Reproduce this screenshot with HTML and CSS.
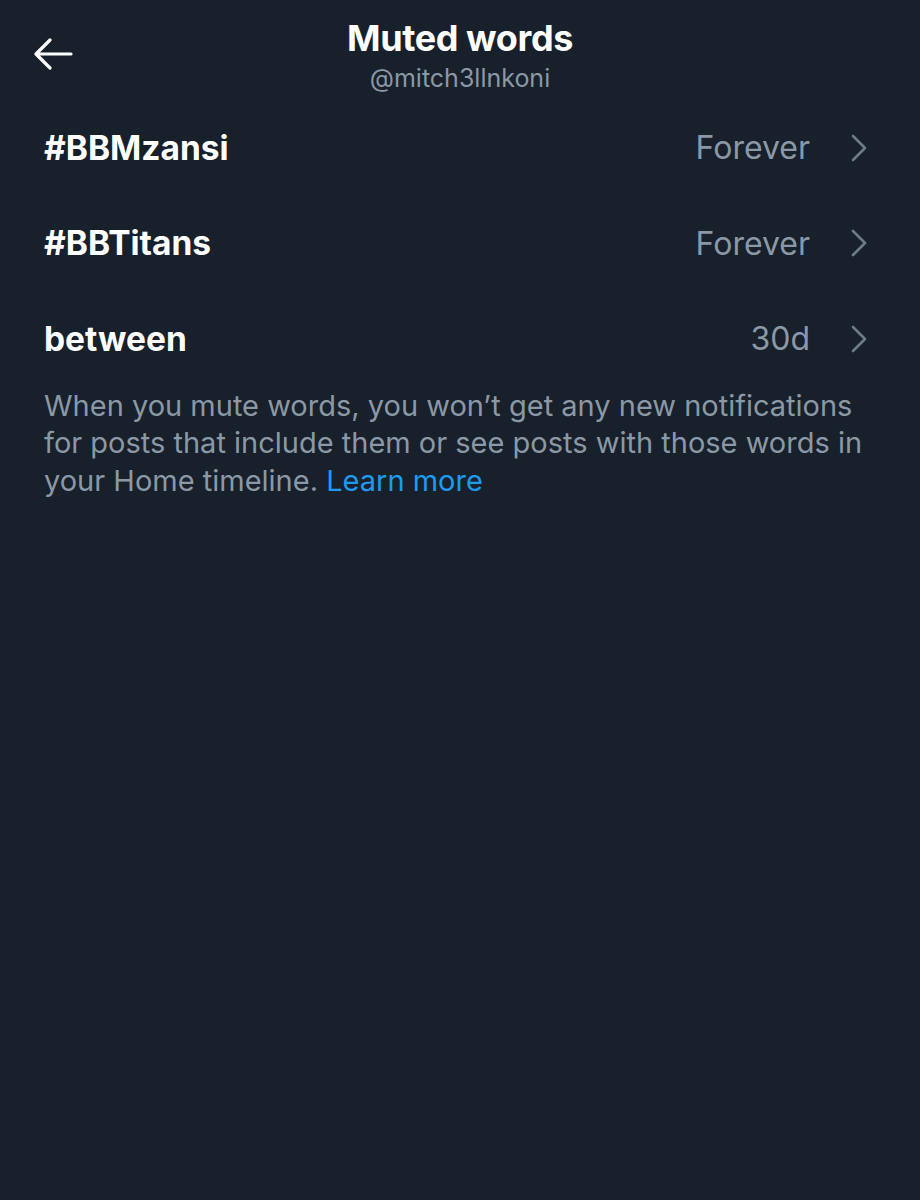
FILE: index.html
```html
<!DOCTYPE html>
<html>
<head>
<meta charset="utf-8">
<link rel="stylesheet" href="styles.css">
</head>
<body>
<div class="page">
  <header class="header">
    <button class="back" aria-label="Back">
      <svg width="40" height="32" viewBox="0 0 40 32"><path d="M38 16H4M17 2L3 16l14 14" fill="none" stroke="#fff" stroke-width="3.2" stroke-linecap="round" stroke-linejoin="round"/></svg>
    </button>
    <div class="titles">
      <div class="title">Muted words</div>
      <div class="subtitle">@mitch3llnkoni</div>
    </div>
  </header>
  <ul class="list">
    <li class="row"><span class="word">#BBMzansi</span><span class="dur">Forever</span><svg class="chev" width="18" height="28" viewBox="0 0 18 28"><path d="M3 2l12 12L3 26" fill="none" stroke="#6e7b89" stroke-width="2.6" stroke-linecap="round" stroke-linejoin="round"/></svg></li>
    <li class="row"><span class="word">#BBTitans</span><span class="dur">Forever</span><svg class="chev" width="18" height="28" viewBox="0 0 18 28"><path d="M3 2l12 12L3 26" fill="none" stroke="#6e7b89" stroke-width="2.6" stroke-linecap="round" stroke-linejoin="round"/></svg></li>
    <li class="row"><span class="word">between</span><span class="dur">30d</span><svg class="chev" width="18" height="28" viewBox="0 0 18 28"><path d="M3 2l12 12L3 26" fill="none" stroke="#6e7b89" stroke-width="2.6" stroke-linecap="round" stroke-linejoin="round"/></svg></li>
  </ul>
  <p class="note">When you mute words, you won’t get any new notifications for posts that include them or see posts with those words in your Home timeline. <a class="link" href="#">Learn more</a></p>
</div>
</body>
</html>
```
FILE: styles.css
```css
html, body {
  margin: 0;
  padding: 0;
  background: #17202b;
}
body {
  width: 920px;
  height: 1200px;
  font-family: "Inter", "Liberation Sans", Arial, sans-serif;
  color: #fff;
}
.page {
  display: flex;
  flex-direction: column;
}
.header {
  display: flex;
  align-items: center;
  height: 100px;
  position: relative;
}
.back {
  background: none;
  border: 0;
  padding: 0;
  margin-left: 33px;
  margin-top: 8px;
  width: 40px;
  height: 32px;
  display: flex;
}
.titles {
  position: absolute;
  left: 0;
  right: 0;
  top: 17px;
  text-align: center;
  pointer-events: none;
}
.title {
  font-size: 36px;
  font-weight: 700;
  line-height: 42px;
  letter-spacing: -0.4px;
}
.subtitle {
  font-size: 25px;
  line-height: 30px;
  color: #8b98a5;
  margin-top: 4px;
}
.list {
  list-style: none;
  margin: 0;
  padding: 0;
}
.row {
  display: flex;
  align-items: center;
  height: 95.5px;
  padding: 0 52px 0 44px;
}
.word {
  flex: 1;
  font-size: 33.5px;
  font-weight: 700;
}
.dur {
  font-size: 32px;
  color: #8b98a5;
  margin-right: 40px;
}
.chev { display: block; }
.note {
  margin: 0;
  padding: 0 40px 0 44px;
  font-size: 29px;
  line-height: 37.5px;
  color: #8b98a5;
}
.link {
  color: #1d9bf0;
  text-decoration: none;
}
```
